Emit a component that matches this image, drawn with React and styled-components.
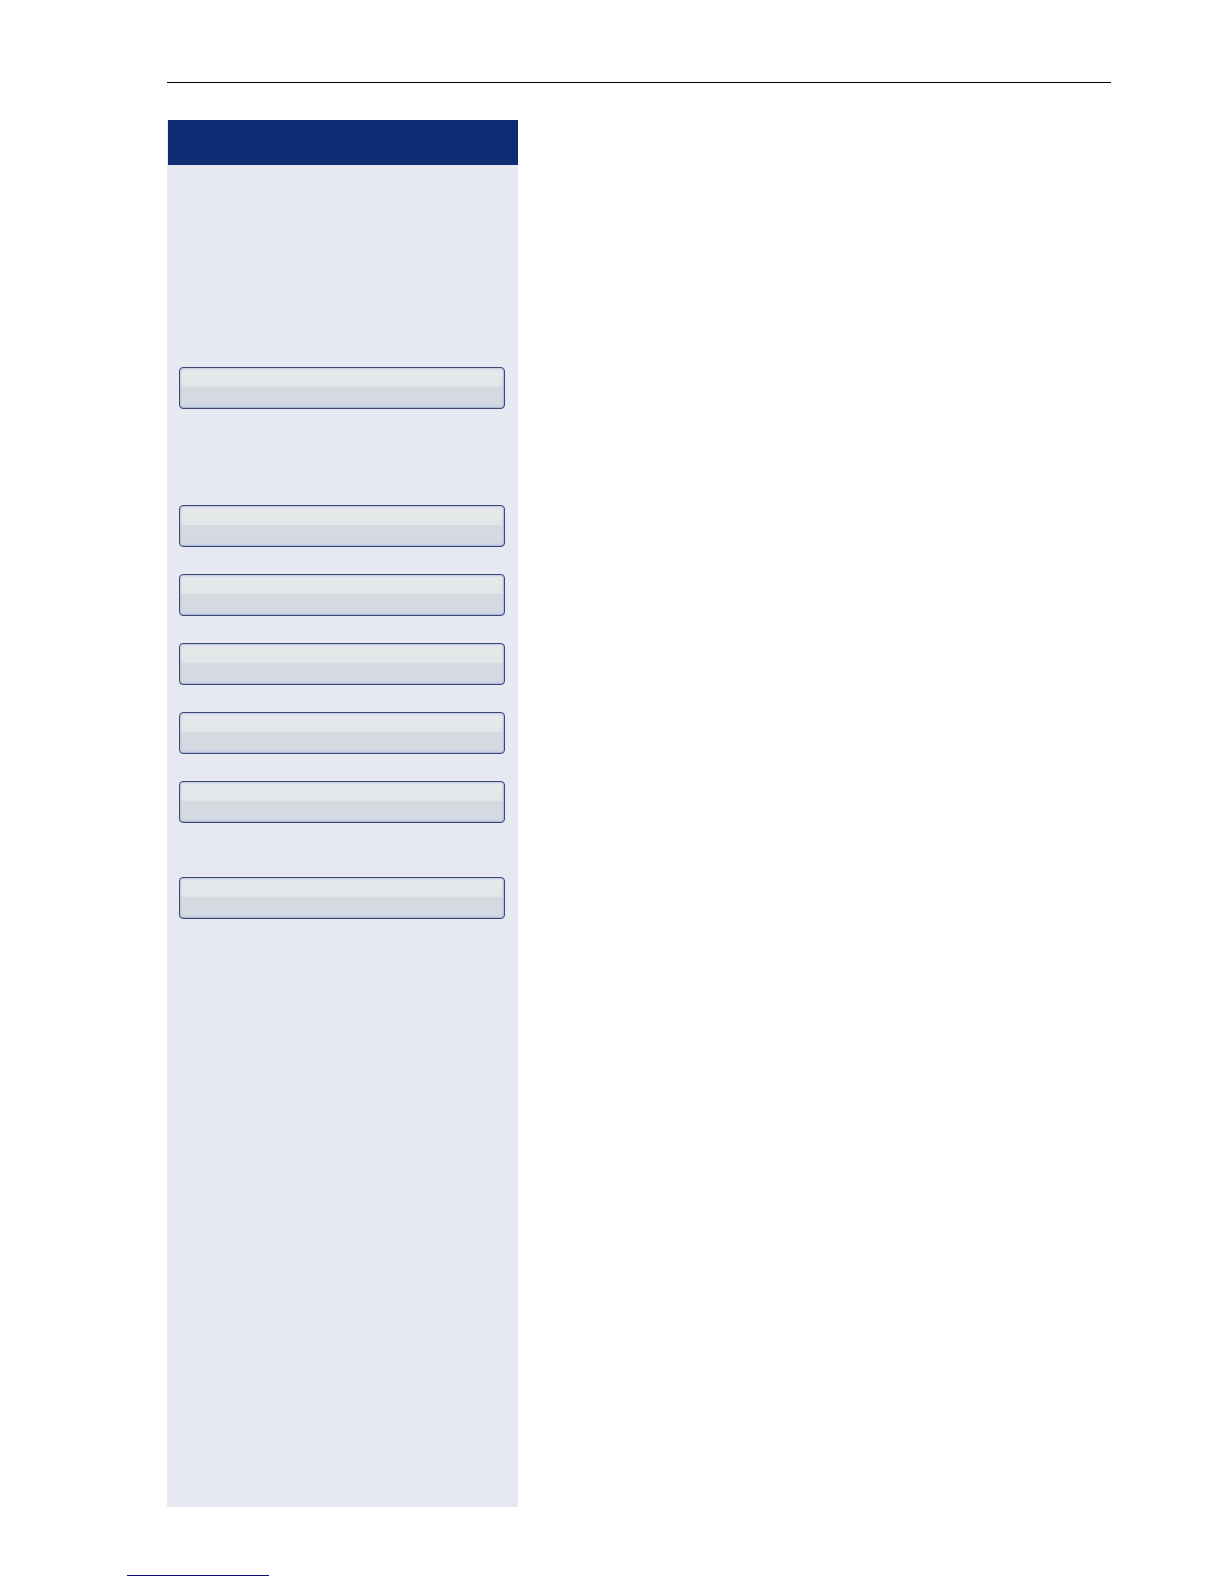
import styled, { createGlobalStyle } from "styled-components";

const GlobalStyle = createGlobalStyle`
  * {
    box-sizing: border-box;
  }
  body {
    margin: 0;
    background: #ffffff;
    font-family: "Liberation Sans", Arial, sans-serif;
  }
`;

const Page = styled.div`
  display: flex;
  flex-direction: column;
  min-height: 100vh;
  padding: 82px 113px 8px 127px;
`;

const TopRule = styled.hr`
  width: calc(100% - 40px);
  height: 1px;
  margin: 0 0 37px 40px;
  border: none;
  background: #000000;
`;

const Content = styled.main`
  display: grid;
  flex: 1;
  grid-template-columns: 351fr 593fr;
  margin-left: 40px;
`;

const SidePanel = styled.aside`
  display: flex;
  flex-direction: column;
  background: #e6e9f2;
`;

const PanelHeader = styled.header`
  height: 45px;
  margin-left: 1px;
  background: #0f2d75;
`;

const KeyGroups = styled.div`
  display: flex;
  flex-direction: column;
  padding: 202px 13px 40px 12px;
`;

const KeyGroup = styled.div`
  display: flex;
  flex-direction: column;
  gap: 27px;
  margin-bottom: ${(props) => props.$space || 0}px;
`;

const KeyButton = styled.button`
  width: 100%;
  height: 42px;
  padding: 0;
  border: 1px solid #3c4774;
  border-radius: 4px;
  background: linear-gradient(
    #e3e7ee 0%,
    #e6e9e9 15%,
    #e2e5e8 47%,
    #d5d9e0 48%,
    #d5dae1 88%,
    #cbd7e6 100%
  );
  box-shadow:
    inset 0 0 2px 1px #bac7e2,
    inset 0 -1px 0 #8791b3,
    inset -1px 0 0 #a3aecb;
  cursor: pointer;

  &:hover {
    filter: brightness(0.97);
  }
`;

const Footer = styled.footer`
  padding-top: 68px;
`;

const FooterLink = styled.a`
  display: block;
  width: 142px;
  height: 1px;
  background: #0b0b80;
`;

const groups = [
  { space: 96, keys: [1] },
  { space: 54, keys: [2, 3, 4, 5, 6] },
  { space: 0, keys: [7] },
];

const App = () => {
  return (
    <>
      <GlobalStyle />
      <Page>
        <TopRule />
        <Content>
          <SidePanel>
            <PanelHeader />
            <KeyGroups>
              {groups.map((group) => (
                <KeyGroup key={group.keys[0]} $space={group.space}>
                  {group.keys.map((key) => (
                    <KeyButton key={key} type="button" aria-label={`Key ${key}`} />
                  ))}
                </KeyGroup>
              ))}
            </KeyGroups>
          </SidePanel>
        </Content>
        <Footer>
          <FooterLink href="#top" aria-label="Back to top" />
        </Footer>
      </Page>
    </>
  );
};

export default App;
